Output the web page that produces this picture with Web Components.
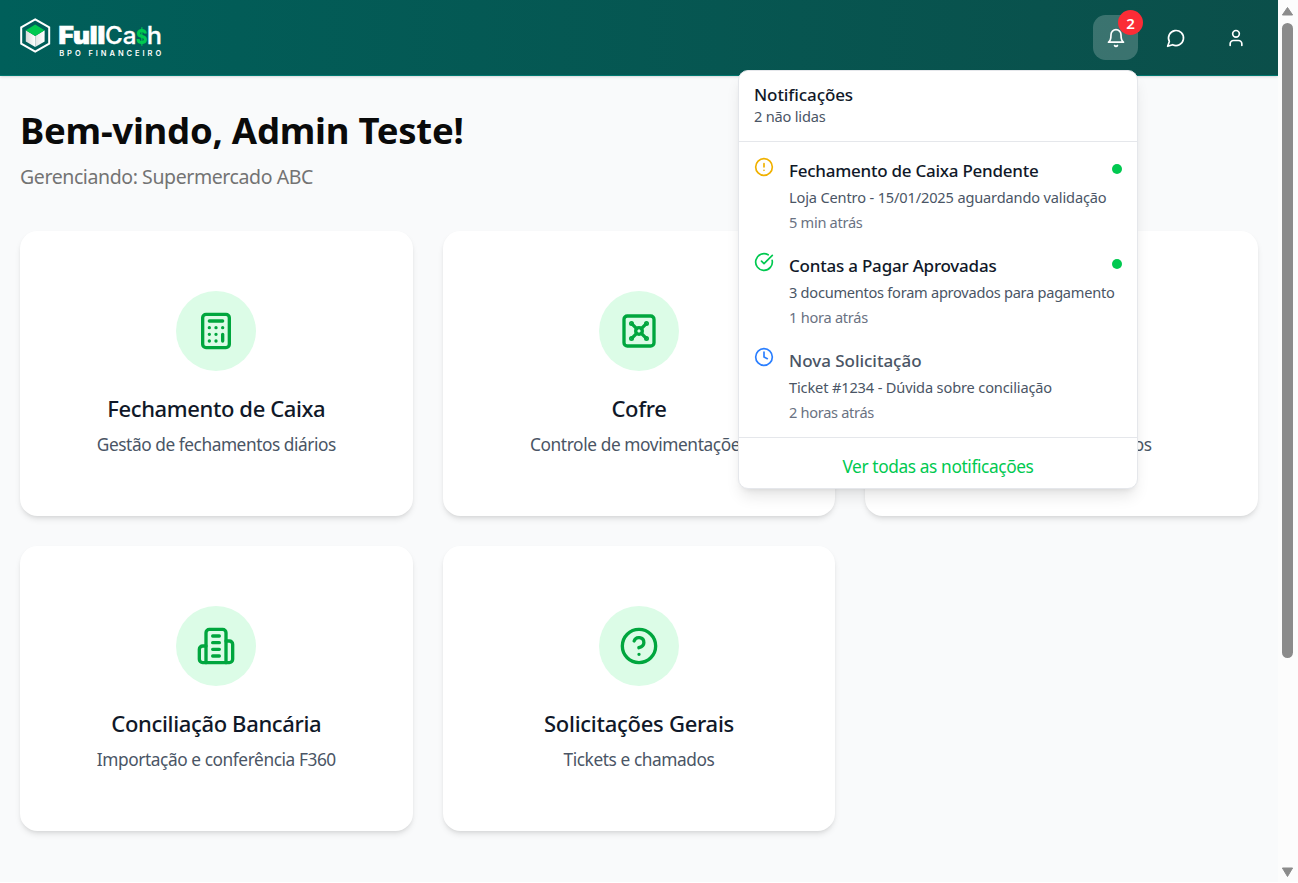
<!DOCTYPE html>
<html lang="pt-BR">
<head>
<meta charset="utf-8">
<title>FullCash</title>
<style>
html,body{margin:0;height:100%;overflow:hidden}
body{font-family:"Noto Sans","Open Sans",sans-serif;background:#fff;color:#0a0a0a}
</style>
</head>
<body>
<fc-app></fc-app>
<script>
const ICONS = {
  bell:'<path d="M10.3 21a1.94 1.94 0 0 0 3.4 0"/><path d="M6 8a6 6 0 0 1 12 0c0 7 3 9 3 9H3s3-2 3-9"/>',
  message:'<path d="M7.9 20A9 9 0 1 0 4 16.1L2 22Z"/>',
  user:'<path d="M19 21v-2a4 4 0 0 0-4-4H9a4 4 0 0 0-4 4v2"/><circle cx="12" cy="7" r="4"/>',
  alert:'<circle cx="12" cy="12" r="10"/><path d="M12 8v4M12 16h.01"/>',
  check:'<path d="M21.801 10A10 10 0 1 1 17 3.335"/><path d="m9 11 3 3L22 4"/>',
  clock:'<circle cx="12" cy="12" r="10"/><path d="M12 6v6l4 2"/>',
  calculator:'<rect width="16" height="20" x="4" y="2" rx="2"/><path d="M8 6h8M16 14v4M16 10h.01M12 10h.01M8 10h.01M12 14h.01M8 14h.01M12 18h.01M8 18h.01"/>',
  vault:'<rect width="18" height="18" x="3" y="3" rx="2"/><circle cx="7.5" cy="7.5" r=".5" fill="currentColor"/><path d="m7.9 7.9 2.7 2.7"/><circle cx="16.5" cy="7.5" r=".5" fill="currentColor"/><path d="m13.4 10.6 2.7-2.7"/><circle cx="7.5" cy="16.5" r=".5" fill="currentColor"/><path d="m7.9 16.1 2.7-2.7"/><circle cx="16.5" cy="16.5" r=".5" fill="currentColor"/><path d="m13.4 13.4 2.7 2.7"/><circle cx="12" cy="12" r="2"/>',
  building:'<path d="M6 22V4a2 2 0 0 1 2-2h8a2 2 0 0 1 2 2v18Z"/><path d="M6 12H4a2 2 0 0 0-2 2v6a2 2 0 0 0 2 2h2"/><path d="M18 9h2a2 2 0 0 1 2 2v9a2 2 0 0 1-2 2h-2"/><path d="M10 6h4M10 10h4M10 14h4M10 18h4"/>',
  help:'<circle cx="12" cy="12" r="10"/><path d="M9.09 9a3 3 0 0 1 5.83 1c0 2-3 3-3 3M12 17h.01"/>',
  card:'<rect width="20" height="14" x="2" y="5" rx="2"/><path d="M2 10h20"/>'
};

class Base extends HTMLElement {
  render(html){ this.attachShadow({mode:'open'}).innerHTML = html; }
  attr(n){ return this.getAttribute(n) || ''; }
}

customElements.define('fc-icon', class extends Base {
  connectedCallback(){
    const s = this.attr('size') || 20;
    this.render(`<style>:host{display:block;width:${s}px;height:${s}px;flex:none}svg{display:block}</style>
    <svg width="${s}" height="${s}" viewBox="0 0 24 24" fill="none" stroke="currentColor" stroke-width="2" stroke-linecap="round" stroke-linejoin="round">${ICONS[this.attr('name')]}</svg>`);
  }
});

/* One line of text whose letter spacing is tuned so that it takes w pixels. */
customElements.define('fc-line', class extends Base {
  connectedCallback(){
    this.render(`<style>:host{display:inline-block;white-space:nowrap}</style><slot></slot>`);
    const w = +this.attr('w'), n = this.textContent.length;
    if (w) this.style.letterSpacing = ((w - this.getBoundingClientRect().width) / n).toFixed(3) + 'px';
  }
});

customElements.define('fc-logo', class extends Base {
  connectedCallback(){
    this.render(`<style>:host{display:block}svg{display:block}</style>
    <svg width="146" height="44" viewBox="18 15 146 44">
      <defs>
        <linearGradient id="l"><stop offset="0" stop-color="#d8dada"/><stop offset="1" stop-color="#fff"/></linearGradient>
        <linearGradient id="r"><stop offset="0" stop-color="#e2e4e4"/><stop offset="1" stop-color="#fff"/></linearGradient>
      </defs>
      <path d="M35.2 19.3 49.2 27.4V43.6L35.2 51.7 21.2 43.6V27.4Z" fill="none" stroke="#fff" stroke-width="2"/>
      <path d="M25.8 30.2 35.2 36V47L25.8 41.4Z" fill="url(#l)"/>
      <path d="M44.6 30.2 35.2 36V47L44.6 41.4Z" fill="url(#r)"/>
      <path d="M35.2 24.6 44.6 30.2 35.2 36 25.8 30.2Z" fill="#00c950"/>
      <g font-family="Inter,sans-serif" fill="#fff" stroke="#fff" font-size="24">
        <text x="58.6" y="44.3" font-weight="900" stroke-width=".7" textLength="46.6" lengthAdjust="spacingAndGlyphs">Full</text>
        <text x="105" y="44.3" font-weight="500" stroke-width=".3" textLength="31.5" lengthAdjust="spacingAndGlyphs">Ca</text>
        <text x="136" y="44.2" font-weight="800" stroke="none" font-size="19.5" textLength="11.5" lengthAdjust="spacingAndGlyphs" fill="#00c950">$</text>
        <text x="146.8" y="44.3" font-weight="500" stroke-width=".3" textLength="15.2" lengthAdjust="spacingAndGlyphs">h</text>
        <text x="59.2" y="55.9" font-size="7.5" font-weight="600" stroke="none" textLength="102">BPO FINANCEIRO</text>
      </g>
    </svg>`);
  }
});

customElements.define('fc-header-button', class extends Base {
  connectedCallback(){
    const c = this.attr('count');
    this.render(`<style>
    :host{display:flex;box-sizing:border-box;position:relative;width:45px;height:45px;padding-top:1px;border-radius:12.5px;align-items:center;justify-content:center;color:#fff}
    :host([active]){background:rgba(255,255,255,.2)}
    .b{position:absolute;top:-5px;right:-5px;width:25px;height:25px;border-radius:50%;background:#fb2c36;font-size:15px;font-weight:600;line-height:26px;text-align:center}
    </style><fc-icon name="${this.attr('icon')}"></fc-icon>${c ? `<span class="b">${c}</span>` : ''}`);
  }
});

customElements.define('fc-header', class extends Base {
  connectedCallback(){
    this.render(`<style>
    :host{display:flex;box-sizing:border-box;height:76px;padding:0 20px 0 18px;align-items:center;justify-content:space-between;background:linear-gradient(90deg,#005f5a,#0b4f4a);border-bottom:1px solid #00786f;box-shadow:0 1px 3px rgba(0,0,0,.1),0 1px 2px -1px rgba(0,0,0,.1)}
    fc-logo{margin-bottom:1px}
    nav{display:flex;gap:15px}
    </style><fc-logo></fc-logo><nav>
      <fc-header-button icon="bell" active count="2"></fc-header-button>
      <fc-header-button icon="message"></fc-header-button>
      <fc-header-button icon="user"></fc-header-button></nav>`);
  }
});

customElements.define('fc-card', class extends Base {
  connectedCallback(){
    this.render(`<style>
    :host{display:flex;flex-direction:column;align-items:center;box-sizing:border-box;height:285px;padding-top:60px;border-radius:17.5px;background:#fff;box-shadow:0 4px 6px -1px rgba(0,0,0,.1),0 2px 4px -2px rgba(0,0,0,.1)}
    .c{width:80px;height:80px;border-radius:50%;background:#dcfce7;color:#00a63e;display:flex;align-items:center;justify-content:center}
    h3{margin:20px 0 0;font-size:22px;line-height:35px;font-weight:500;color:#101828}
    p{margin:5px 0 0;font-size:17.3px;line-height:28px;color:#4a5565}
    </style><div class="c"><fc-icon size="40" name="${this.attr('icon')}"></fc-icon></div>
    <h3><fc-line w="${this.attr('tw')}">${this.attr('heading')}</fc-line></h3>
    <p><fc-line w="${this.attr('dw')}">${this.attr('text')}</fc-line></p>`);
  }
});

customElements.define('fc-notice', class extends Base {
  connectedCallback(){
    this.render(`<style>
    :host{display:flex;box-sizing:border-box;height:95px;padding:15px;gap:15px}
    fc-icon{color:${this.attr('color')}}
    .t{flex:1;min-width:0}
    .r{display:flex;justify-content:space-between;height:28px}
    h4{margin:0;font-size:17px;line-height:28px;font-weight:500;color:#101828}
    :host([read]) h4{color:#4a5565}
    i{width:10px;height:10px;border-radius:50%;background:#00c950;margin-top:7px}
    :host([read]) i{display:none}
    p{margin:0;font-size:14.6px;line-height:25px;color:#4a5565}
    .w{color:#6a7282}
    </style><fc-icon name="${this.attr('icon')}"></fc-icon><div class="t">
    <div class="r"><h4><fc-line w="${this.attr('tw')}">${this.attr('heading')}</fc-line></h4><i></i></div>
    <p><fc-line w="${this.attr('dw')}">${this.attr('text')}</fc-line></p>
    <p class="w"><fc-line w="${this.attr('ww')}">${this.attr('when')}</fc-line></p></div>`);
  }
});

customElements.define('fc-notifications', class extends Base {
  connectedCallback(){
    this.render(`<style>
    :host{display:block;box-sizing:border-box;width:400px;height:419px;background:#fff;border:1px solid #e5e7eb;border-radius:10px;box-shadow:0 10px 15px -3px rgba(0,0,0,.1),0 4px 6px -4px rgba(0,0,0,.1);overflow:hidden}
    header{box-sizing:border-box;height:71px;padding:10px 15px 0;border-bottom:1px solid #e5e7eb}
    h2{margin:0;font-size:17px;line-height:28px;font-weight:500;color:#101828}
    header p{margin:-4px 0 0;font-size:14.6px;line-height:22px;color:#4a5565}
    .l{height:295px}
    footer{box-sizing:border-box;height:51px;border-top:1px solid #e5e7eb;text-align:center;font-size:17.3px;line-height:57px;color:#00c950}
    </style>
    <header><h2><fc-line w="99">Notificações</fc-line></h2><p><fc-line w="71.5">2 não lidas</fc-line></p></header>
    <div class="l">
    <fc-notice icon="alert" color="#f0b100" heading="Fechamento de Caixa Pendente" tw="249.5" text="Loja Centro - 15/01/2025 aguardando validação" dw="317.5" when="5 min atrás" ww="73.5"></fc-notice>
    <fc-notice icon="check" color="#00c950" heading="Contas a Pagar Aprovadas" tw="207.5" text="3 documentos foram aprovados para pagamento" dw="325.5" when="1 hora atrás" ww="79"></fc-notice>
    <fc-notice read icon="clock" color="#2b7fff" heading="Nova Solicitação" tw="132.5" text="Ticket #1234 - Dúvida sobre conciliação" dw="263" when="2 horas atrás" ww="85"></fc-notice>
    </div>
    <footer><fc-line w="191">Ver todas as notificações</fc-line></footer>`);
  }
});

customElements.define('fc-scrollbar', class extends Base {
  connectedCallback(){
    this.render(`<style>
    :host{display:flex;flex-direction:column;box-sizing:border-box;width:20px;height:882px;padding:6px 4px 4px 3px;align-items:center;background:#fcfcfc}
    svg{display:block;flex:none}
    .th{width:11px;height:635px;margin-top:7px;border-radius:6px;background:#8b8b8b}
    .sp{flex:1}
    </style><svg width="13" height="10"><path d="M6.5 1.5 11.6 9H1.4Z" fill="#8b8b8b" stroke="#8b8b8b" stroke-linejoin="round"/></svg>
    <div class="th"></div><div class="sp"></div>
    <svg width="13" height="11"><path d="M6.5 9.5 11.6 1H1.4Z" fill="#8b8b8b" stroke="#8b8b8b" stroke-linejoin="round"/></svg>`);
  }
});

customElements.define('fc-app', class extends Base {
  connectedCallback(){
    this.render(`<style>
    :host{display:flex;position:relative;height:882px;overflow:hidden;background:#f9fafb}
    .page{flex:1;min-width:0}
    main{padding:29px 20px}
    h1{margin:0;font-size:36.5px;line-height:50px;font-weight:700;color:#0a0a0a}
    .sub{margin:7px 0 0;font-size:19.5px;line-height:30px;color:#737373}
    .grid{display:grid;grid-template-columns:repeat(3,1fr);gap:30px;margin-top:39px}
    fc-notifications{position:absolute;left:738px;top:70px}
    </style>
    <div class="page"><fc-header></fc-header><main>
    <h1><fc-line w="443.5">Bem-vindo, Admin Teste!</fc-line></h1>
    <p class="sub"><fc-line w="293">Gerenciando: Supermercado ABC</fc-line></p>
    <div class="grid">
    <fc-card icon="calculator" heading="Fechamento de Caixa" tw="218" text="Gestão de fechamentos diários" dw="239"></fc-card>
    <fc-card icon="vault" heading="Cofre" tw="55" text="Controle de movimentações" dw="218"></fc-card>
    <fc-card icon="card" heading="Contas a Pagar" tw="148" text="Gestão de pagamentos" dw="180"></fc-card>
    <fc-card icon="building" heading="Conciliação Bancária" tw="210" text="Importação e conferência F360" dw="239"></fc-card>
    <fc-card icon="help" heading="Solicitações Gerais" tw="190" text="Tickets e chamados" dw="151"></fc-card>
    </div></main></div>
    <fc-scrollbar></fc-scrollbar>
    <fc-notifications></fc-notifications>`);
  }
});
</script>
</body>
</html>
